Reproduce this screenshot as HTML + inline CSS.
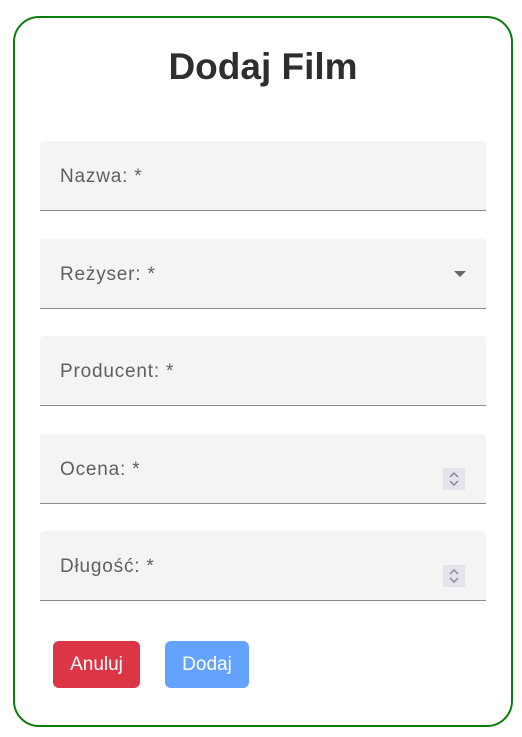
<!DOCTYPE html>
<html><head><meta charset="utf-8"><style>
*{box-sizing:border-box;margin:0;padding:0}
body{width:522px;height:737px;background:#fff;font-family:"Liberation Sans",sans-serif;position:relative;overflow:hidden}
.card{position:absolute;left:13px;top:16px;width:500px;height:711px;border:2px solid #0a7d0a;border-radius:26px}
h1{position:absolute;left:0;width:526px;top:46px;text-align:center;font-size:37px;font-weight:bold;color:#2e2e2e;letter-spacing:0px}
.f{position:absolute;left:40px;width:446px;height:70px;background:#f4f4f4;border-bottom:1px solid #8a8a8a;border-radius:4px 4px 0 0}
.f span{position:absolute;left:20px;top:25px;font-size:19px;color:#606060;letter-spacing:0.8px}
.arr{position:absolute;right:20px;top:32px;width:0;height:0;border-left:6px solid transparent;border-right:6px solid transparent;border-top:6px solid #666}
.spin{position:absolute;left:403px;top:34px;width:22px;height:22px;background:#e4e4ea}
.btn{position:absolute;top:641px;height:47px;border-radius:6px;color:#fff;font-size:19px;text-align:center;line-height:47px}
</style></head><body>
<div class="card"></div>
<h1>Dodaj Film</h1>
<div class="f" style="top:141px"><span>Nazwa: *</span></div>
<div class="f" style="top:239px"><span>Reżyser: *</span><div class="arr"></div></div>
<div class="f" style="top:336px"><span>Producent: *</span></div>
<div class="f" style="top:434px"><span>Ocena: *</span><svg class="spin" viewBox="0 0 22 22"><path d="M7 9l4-4 4 4M7 13l4 4 4-4" fill="none" stroke="#8a8a9a" stroke-width="1.5"/></svg></div>
<div class="f" style="top:531px"><span>Długość: *</span><svg class="spin" viewBox="0 0 22 22"><path d="M7 9l4-4 4 4M7 13l4 4 4-4" fill="none" stroke="#8a8a9a" stroke-width="1.5"/></svg></div>
<div class="btn" style="left:53px;width:87px;background:#dc3545">Anuluj</div>
<div class="btn" style="left:165px;width:84px;background:#63a2ff">Dodaj</div>
</body></html>
